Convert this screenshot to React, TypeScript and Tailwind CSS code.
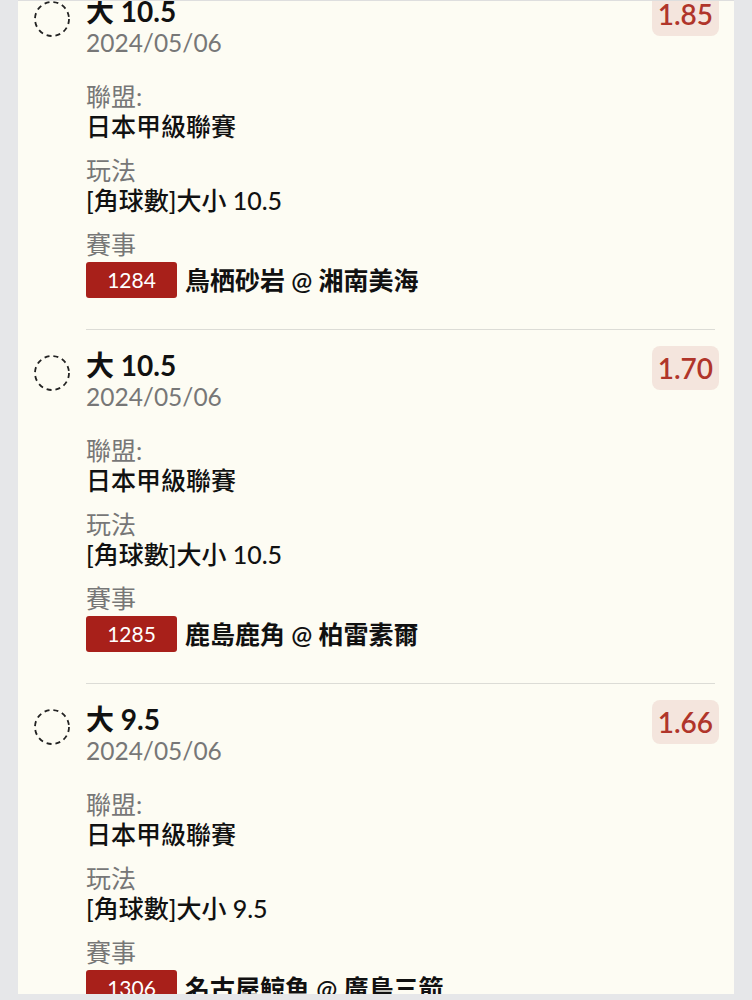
import { FC } from 'react';

type Bet = {
  pick: string;
  date: string;
  odds: string;
  league: string;
  market: string;
  matchNo: string;
  match: string;
};

const bets: Bet[] = [
  {
    pick: '大 10.5',
    date: '2024/05/06',
    odds: '1.85',
    league: '日本甲級聯賽',
    market: '[角球數]大小 10.5',
    matchNo: '1284',
    match: '鳥栖砂岩 @ 湘南美海',
  },
  {
    pick: '大 10.5',
    date: '2024/05/06',
    odds: '1.70',
    league: '日本甲級聯賽',
    market: '[角球數]大小 10.5',
    matchNo: '1285',
    match: '鹿島鹿角 @ 柏雷素爾',
  },
  {
    pick: '大 9.5',
    date: '2024/05/06',
    odds: '1.66',
    league: '日本甲級聯賽',
    market: '[角球數]大小 9.5',
    matchNo: '1306',
    match: '名古屋鯨魚 @ 廣島三箭',
  },
];

const font = {
  fontFamily: 'Lato, "Noto Sans CJK TC", sans-serif',
};

// dashed "not selected" ring
const DashedCircle: FC = () => (
  <svg width="38" height="38" viewBox="0 0 38 38" className="shrink-0">
    <circle cx="19" cy="19" r="17" fill="none" stroke="#222" strokeWidth="1.8" strokeDasharray="5 4" />
  </svg>
);

const BetItem: FC<{ bet: Bet }> = ({ bet }) => {
  return (
    <div className="flex pl-[15px] pr-[15px]">
      <div className="mt-[24px]">
        <DashedCircle />
      </div>

      <div className="flex-1 ml-[15px] pt-[17px] pb-[31px] border-b border-[#dcdcd6] mr-[4px]">
        <div className="flex items-start justify-between">
          <div>
            <div className="text-[28px] leading-[36px] font-bold text-[#111]">{bet.pick}</div>
            <div className="mt-[1px] text-[24.5px] leading-[26px] text-[#777]">{bet.date}</div>
          </div>
          <div className="-mt-[1px] -mr-[4px] h-[44px] px-[6px] rounded-[8px] bg-[#f4e5dd] text-[28px] leading-[44px] font-semibold text-[#b0352a]">
            {bet.odds}
          </div>
        </div>

        <div className="mt-[25px] text-[25px] leading-[30px]">
          <div className="text-[#777]">聯盟:</div>
          <div className="font-medium text-[#111]">{bet.league}</div>

          <div className="mt-[14px] text-[#777]">玩法</div>
          <div className="font-medium text-[#111]">{bet.market}</div>

          <div className="mt-[14px] text-[#777]">賽事</div>
          <div className="mt-[3px] flex items-center gap-[8px]">
            <span className="w-[91px] h-[36px] rounded-[3px] bg-[#a8201a] text-white text-[21px] leading-[36px] text-center">
              {bet.matchNo}
            </span>
            <span className="font-semibold text-[#111]">{bet.match}</span>
          </div>
        </div>
      </div>
    </div>
  );
};

const App: FC = () => {
  return (
    <div className="h-[1000px] overflow-hidden bg-[#e6e7e9]" style={font}>
      <div className="ml-[18px] w-[716px] h-[994px] overflow-hidden bg-[#fdfcf3] border-t border-[#dedede]">
        <div className="-mt-[25px]">
          {bets.map((bet, i) => (
            <BetItem key={i} bet={bet} />
          ))}
        </div>
      </div>
    </div>
  );
};

export default App;
